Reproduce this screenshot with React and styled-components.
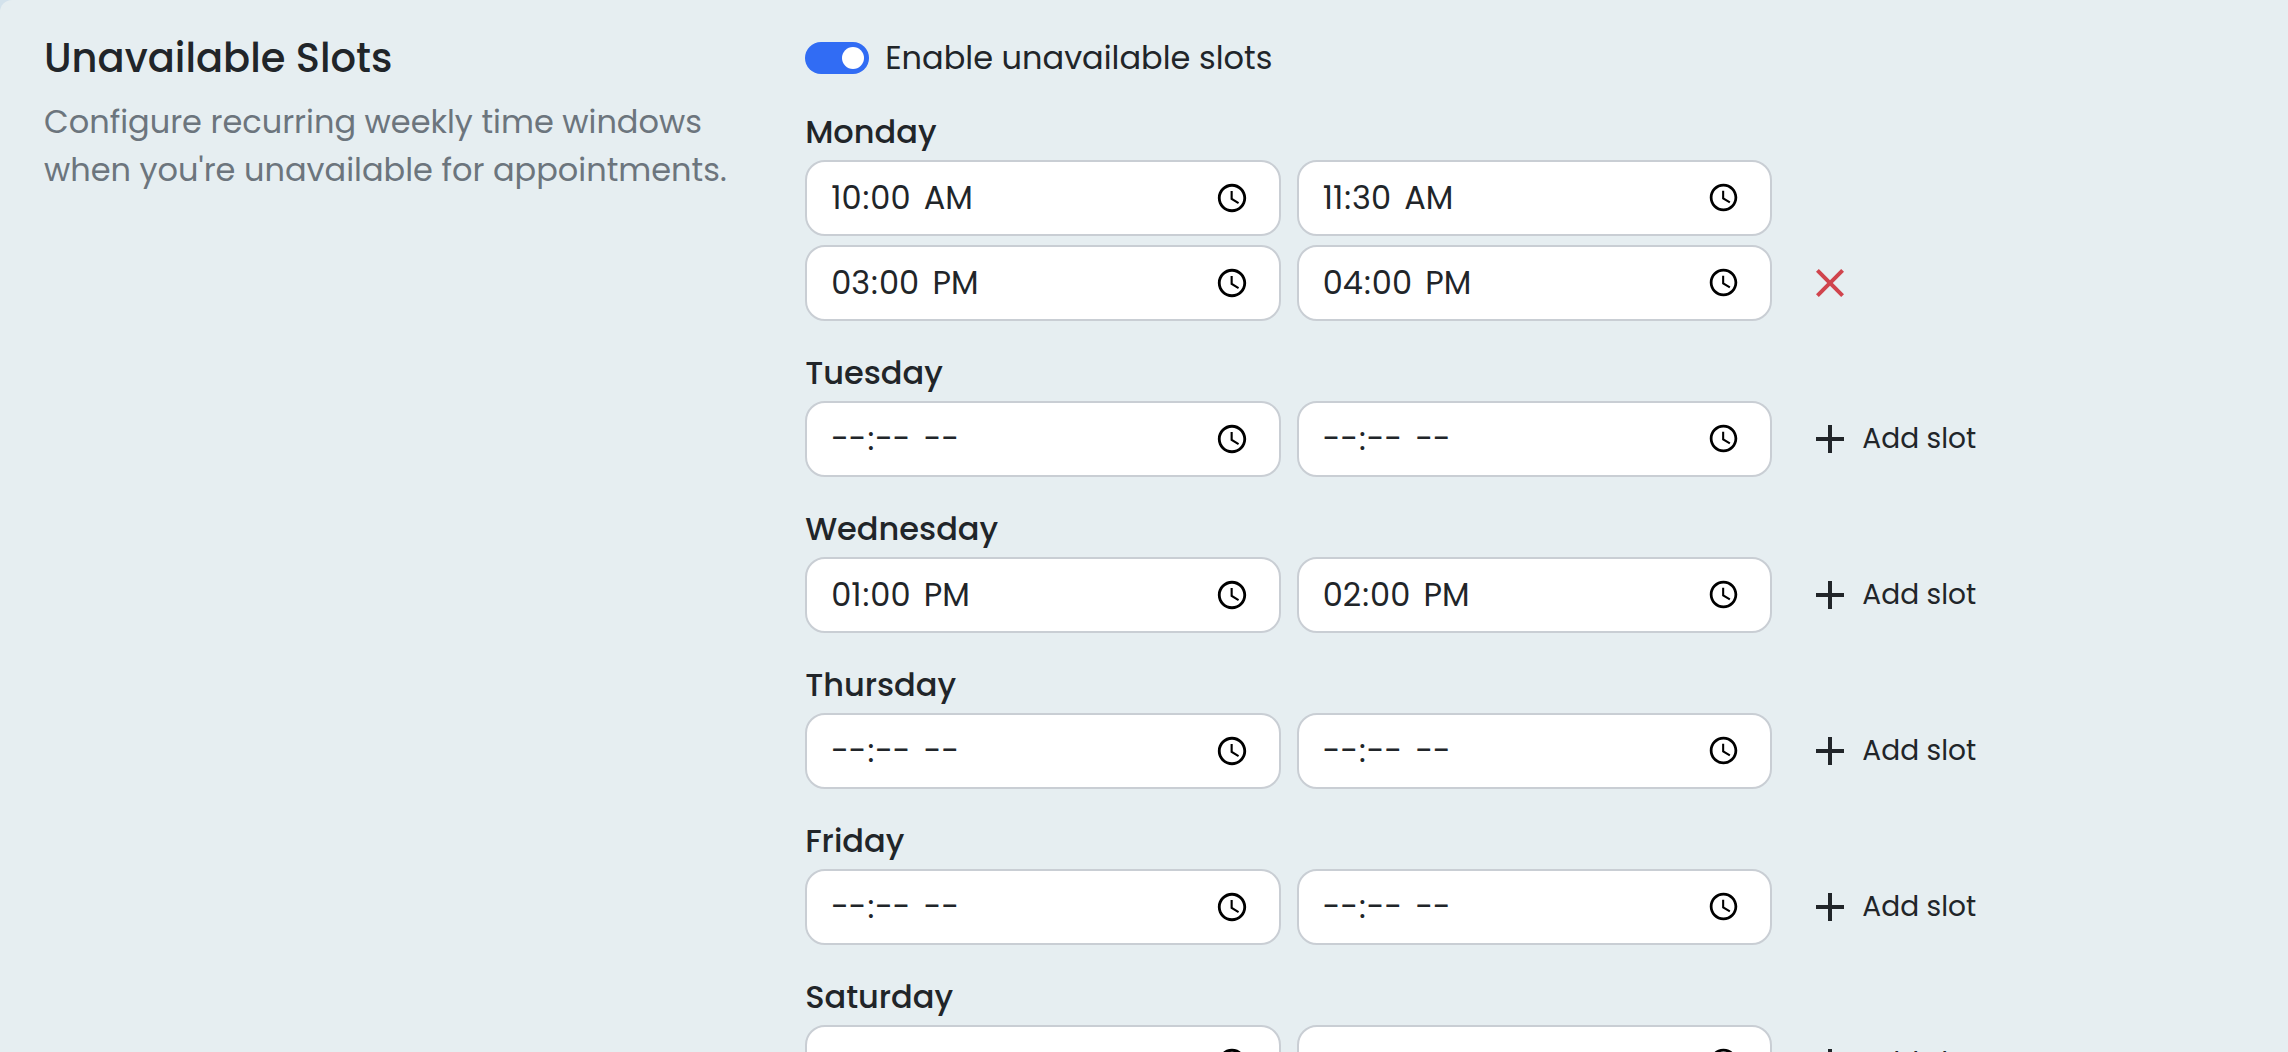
import React, { useState } from "react";
import styled, { createGlobalStyle } from "styled-components";
import { MdAdd, MdClose } from "react-icons/md";

const GlobalStyle = createGlobalStyle`
  *, *::before, *::after { box-sizing: border-box; }
  html { scrollbar-width: none; }
  body {
    margin: 0;
    background: #d3e2ec;
    color: #212529;
    font-family: Poppins, Inter, "Open Sans", sans-serif;
    font-size: 32px;
    line-height: 48px;
  }
`;

const Panel = styled.main`
  display: grid;
  grid-template-columns: minmax(0, 12fr) minmax(0, 23fr);
  align-items: start;
  min-height: 100vh;
  padding: 34px 24px 0 44px;
  border-top-left-radius: 12px;
  background: #e6eef1;
`;

const Intro = styled.section`
  padding-right: 24px;
`;

const Title = styled.h1`
  margin: 0 0 16px;
  font-size: 40px;
  font-weight: 500;
  line-height: 48px;
`;

const Description = styled.p`
  margin: 0;
  color: #6c757d;
`;

const Schedule = styled.form`
  display: grid;
  gap: 26px;
`;

const Days = styled.div`
  display: grid;
  gap: 28px;
`;

const SwitchLabel = styled.label`
  display: flex;
  align-items: center;
  gap: 16px;
`;

const Switch = styled.input`
  display: flex;
  align-items: center;
  justify-content: flex-start;
  appearance: none;
  width: 64px;
  height: 32px;
  margin: 0;
  padding: 0 5px;
  border-radius: 16px;
  background: #adb5bd;

  &::before {
    content: "";
    width: 22px;
    height: 22px;
    border-radius: 50%;
    background: #fff;
  }

  &:checked {
    justify-content: flex-end;
    background: #316cf4;
  }
`;

const Day = styled.fieldset`
  min-width: 0;
  margin: 0;
  padding: 0;
  border: 0;
`;

const DayName = styled.legend`
  padding: 0 0 4px;
  font-weight: 500;
`;

const SlotList = styled.div`
  display: grid;
  gap: 9px;
`;

const SlotRow = styled.div`
  display: grid;
  grid-template-columns: repeat(3, minmax(0, 1fr));
  align-items: center;
  gap: 16px;
`;

const TimeInput = styled.input`
  width: 100%;
  height: 76px;
  margin: 0;
  padding: 12px 27px 12px 23px;
  border: 2px solid #c9ced4;
  border-radius: 20px;
  background: #fff;
  color: inherit;
  font: inherit;

  &::-webkit-datetime-edit-ampm-field {
    margin-left: 7px;
  }
`;

const SlotButton = styled.button`
  display: flex;
  align-items: center;
  justify-self: start;
  gap: 8px;
  padding: 0 18px;
  border: 0;
  background: none;
  color: ${(p) => (p.$danger ? "#d0444d" : "inherit")};
  font: inherit;
  font-size: 28px;
  cursor: pointer;
`;

const week = [
  { name: "Monday", slots: [["10:00", "11:30"], ["15:00", "16:00"]] },
  { name: "Tuesday", slots: [["", ""]] },
  { name: "Wednesday", slots: [["13:00", "14:00"]] },
  { name: "Thursday", slots: [["", ""]] },
  { name: "Friday", slots: [["", ""]] },
  { name: "Saturday", slots: [["", ""]] },
];

function SlotAction({ slots, index }) {
  if (index > 0) {
    return (
      <SlotButton type="button" $danger aria-label="Remove slot">
        <MdClose size={48} />
      </SlotButton>
    );
  }
  if (slots.length > 1) return null;
  return (
    <SlotButton type="button">
      <MdAdd size={48} />
      Add slot
    </SlotButton>
  );
}

export default function App() {
  const [enabled, setEnabled] = useState(true);
  return (
    <>
      <GlobalStyle />
      <Panel>
        <Intro>
          <Title>Unavailable Slots</Title>
          <Description>
            Configure recurring weekly time windows when you're unavailable for appointments.
          </Description>
        </Intro>
        <Schedule>
          <SwitchLabel>
            <Switch
              type="checkbox"
              role="switch"
              checked={enabled}
              onChange={(e) => setEnabled(e.target.checked)}
            />
            Enable unavailable slots
          </SwitchLabel>
          <Days>
            {week.map((day) => (
              <Day key={day.name}>
                <DayName>{day.name}</DayName>
                <SlotList>
                  {day.slots.map(([from, to], i) => (
                    <SlotRow key={i}>
                      <TimeInput type="time" defaultValue={from} aria-label={`${day.name} start`} />
                      <TimeInput type="time" defaultValue={to} aria-label={`${day.name} end`} />
                      <SlotAction slots={day.slots} index={i} />
                    </SlotRow>
                  ))}
                </SlotList>
              </Day>
            ))}
          </Days>
        </Schedule>
      </Panel>
    </>
  );
}
